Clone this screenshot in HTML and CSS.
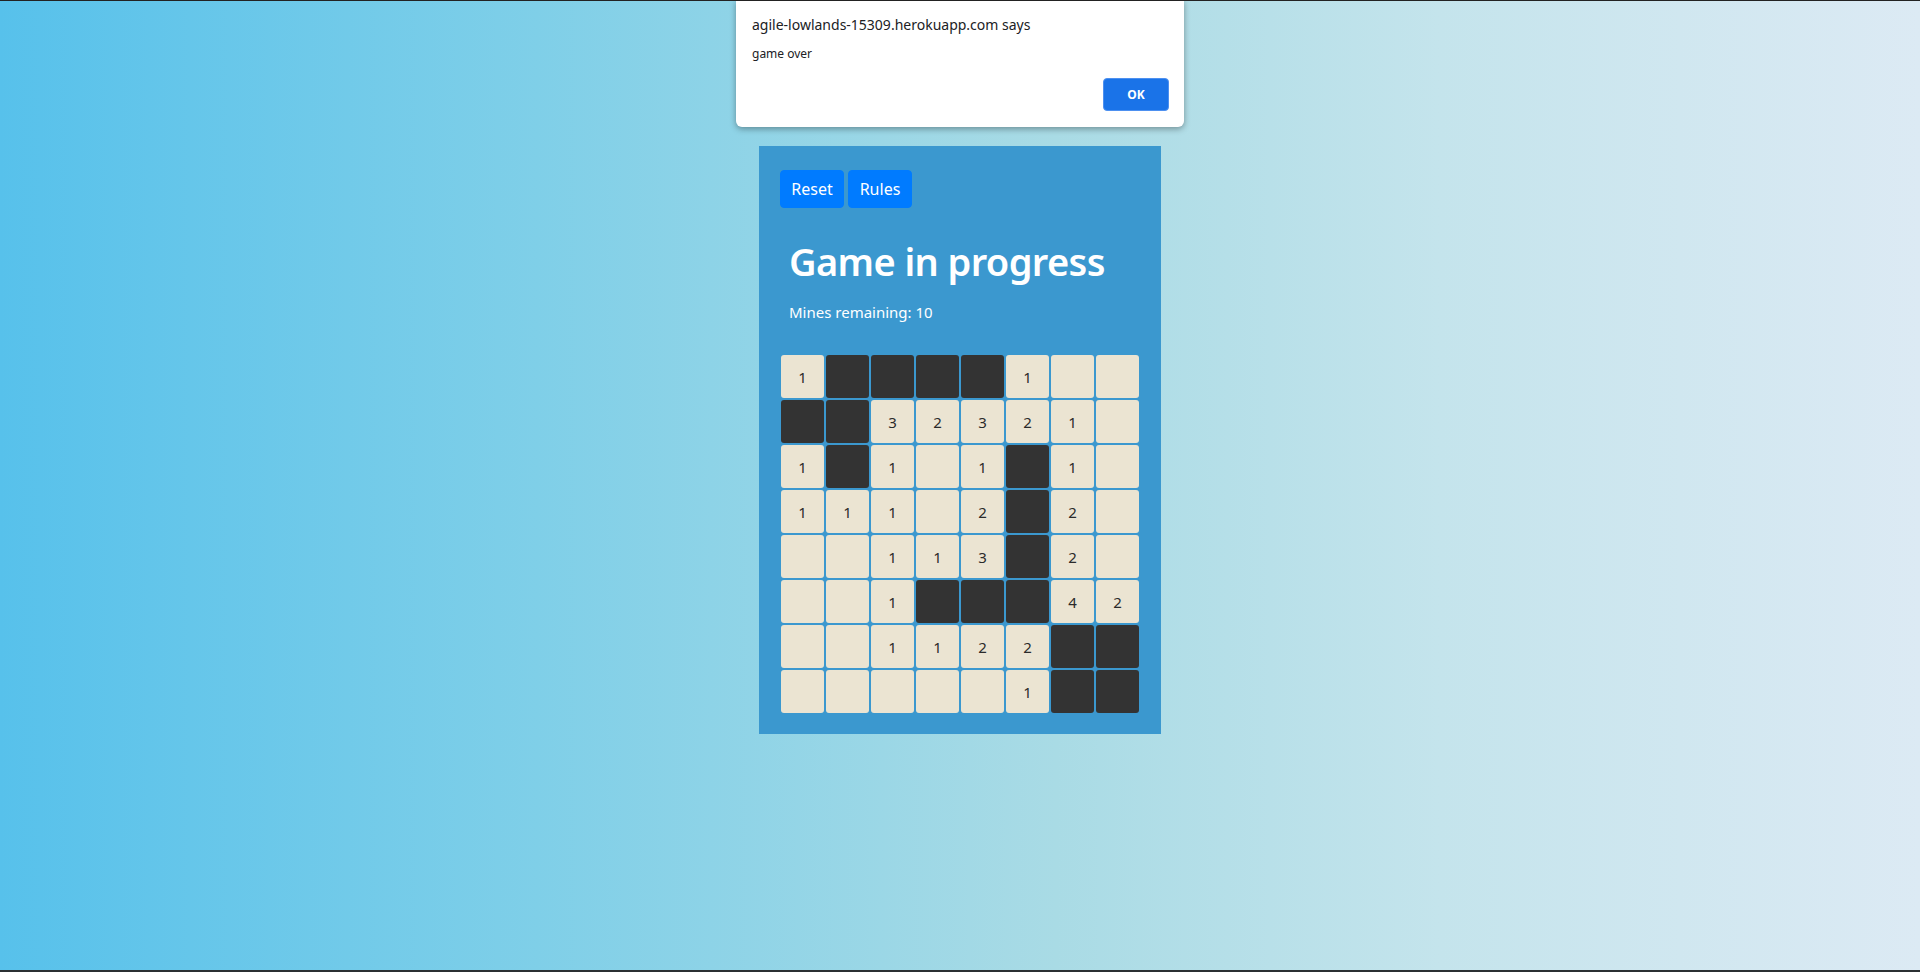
FILE: index.html
```html
<!DOCTYPE html>
<html>
<head>
<meta charset="utf-8">
<title>Minesweeper</title>
<link rel="stylesheet" href="styles.css">
</head>
<body>
<div class="page">
  <main class="board-panel">
    <div class="toolbar">
      <button class="btn">Reset</button>
      <button class="btn">Rules</button>
    </div>
    <section class="status">
      <h1 class="status-title">Game in progress</h1>
      <p class="status-mines">Mines remaining: 10</p>
    </section>
    <div class="grid">
      <div class="cell open">1</div><div class="cell hidden"></div><div class="cell hidden"></div><div class="cell hidden"></div><div class="cell hidden"></div><div class="cell open">1</div><div class="cell open"></div><div class="cell open"></div>
      <div class="cell hidden"></div><div class="cell hidden"></div><div class="cell open">3</div><div class="cell open">2</div><div class="cell open">3</div><div class="cell open">2</div><div class="cell open">1</div><div class="cell open"></div>
      <div class="cell open">1</div><div class="cell hidden"></div><div class="cell open">1</div><div class="cell open"></div><div class="cell open">1</div><div class="cell hidden"></div><div class="cell open">1</div><div class="cell open"></div>
      <div class="cell open">1</div><div class="cell open">1</div><div class="cell open">1</div><div class="cell open"></div><div class="cell open">2</div><div class="cell hidden"></div><div class="cell open">2</div><div class="cell open"></div>
      <div class="cell open"></div><div class="cell open"></div><div class="cell open">1</div><div class="cell open">1</div><div class="cell open">3</div><div class="cell hidden"></div><div class="cell open">2</div><div class="cell open"></div>
      <div class="cell open"></div><div class="cell open"></div><div class="cell open">1</div><div class="cell hidden"></div><div class="cell hidden"></div><div class="cell hidden"></div><div class="cell open">4</div><div class="cell open">2</div>
      <div class="cell open"></div><div class="cell open"></div><div class="cell open">1</div><div class="cell open">1</div><div class="cell open">2</div><div class="cell open">2</div><div class="cell hidden"></div><div class="cell hidden"></div>
      <div class="cell open"></div><div class="cell open"></div><div class="cell open"></div><div class="cell open"></div><div class="cell open"></div><div class="cell open">1</div><div class="cell hidden"></div><div class="cell hidden"></div>
    </div>
  </main>
</div>
<div class="dialog">
  <div class="dialog-title">agile-lowlands-15309.herokuapp.com says</div>
  <div class="dialog-msg">game over</div>
  <div class="dialog-actions"><button class="dialog-ok">OK</button></div>
</div>
<div class="topline"></div>
<div class="bottombar"></div>
</body>
</html>
```
FILE: styles.css
```css
html, body {
  margin: 0;
  height: 100%;
}
body {
  font-family: "Noto Sans", "Open Sans", sans-serif;
  background: linear-gradient(to right, #57c1eb 0%, #7fcfe8 28%, #a9dbe5 55%, #c4e4ec 75%, #dceaf4 100%);
  overflow: hidden;
  position: relative;
}
.page {
  display: flex;
  justify-content: center;
  padding-top: 146px;
}
.board-panel {
  width: 402px;
  box-sizing: border-box;
  background: #3b98cf;
  padding: 24px 21px 21px 21px;
  color: #fff;
}
.toolbar {
  display: flex;
  gap: 4px;
}
.btn {
  background: #007bff;
  color: #fff;
  border: 1px solid #007bff;
  border-radius: 4px;
  font-family: "Noto Sans", "Open Sans", sans-serif;
  font-size: 16px;
  line-height: 24px;
  height: 38px;
  width: 64px;
  padding: 0;
}
.status {
  padding: 29px 0 0 9px;
}
.status-title {
  margin: 0 0 15px;
  font-size: 38px;
  line-height: 48px;
  font-weight: 600;
  letter-spacing: -0.6px;
  white-space: nowrap;
}
.status-mines {
  margin: 0;
  font-size: 15px;
  line-height: 24px;
}
.grid {
  margin: 31px 0 0 1px;
  display: grid;
  grid-template-columns: repeat(8, 43px);
  grid-auto-rows: 43px;
  gap: 2px;
}
.cell {
  border-radius: 3px;
  display: flex;
  align-items: center;
  justify-content: center;
  font-size: 15px;
  color: #2b2b2b;
}
.open {
  background: #ebe4d2;
}
.hidden {
  background: #333333;
}
.dialog {
  position: absolute;
  left: 736px;
  top: 0;
  width: 448px;
  height: 127px;
  box-sizing: border-box;
  background: #fff;
  border-radius: 0 0 6px 6px;
  box-shadow: 0 2px 6px rgba(0,0,0,0.35);
  padding: 14px 15px 16px 16px;
  display: flex;
  flex-direction: column;
  font-family: "Noto Sans", "Open Sans", sans-serif;
  color: #202124;
}
.dialog-title {
  font-size: 14px;
  line-height: 22px;
}
.dialog-msg {
  font-size: 12px;
  line-height: 18px;
  margin-top: 9px;
}
.dialog-actions {
  margin-top: auto;
  display: flex;
  justify-content: flex-end;
}
.dialog-ok {
  width: 66px;
  height: 33px;
  background: #1a73e8;
  border: 1px solid #4d90f0;
  border-radius: 4px;
  color: #fff;
  font-weight: 700;
  font-size: 12px;
  font-family: "Noto Sans", "Open Sans", sans-serif;
}
.topline {
  position: absolute;
  left: 0;
  top: 0;
  width: 100%;
  height: 1px;
  background: #222;
}
.bottombar {
  position: absolute;
  left: 0;
  bottom: 0;
  width: 100%;
  height: 2px;
  background: #2b3033;
}
```
